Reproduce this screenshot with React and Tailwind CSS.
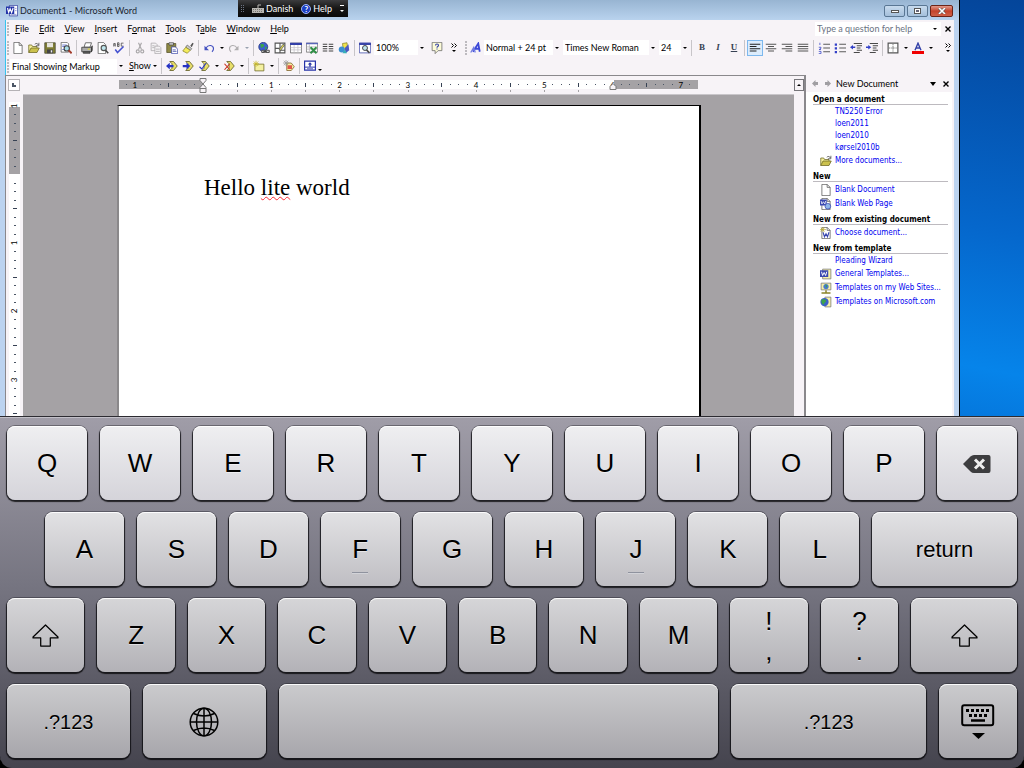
import clsx from "clsx";

const MENUS = [
  ["", "F", "ile"],
  ["", "E", "dit"],
  ["", "V", "iew"],
  ["", "I", "nsert"],
  ["F", "o", "rmat"],
  ["", "T", "ools"],
  ["T", "a", "ble"],
  ["", "W", "indow"],
  ["", "H", "elp"],
];

const page = <path d="M2.500 .5h7l4 4v11h-11z" fill="#fff" stroke="#555" />;
const fold = <path d="M9.500 .5v4h4" fill="none" stroke="#555" />;
const arrowLeft = <path d="M0 8l5-4.500v3h5v3H5v3z" fill="#2733c4" />;
const diamond = <path d="M5 2h5l5 6-5 6H5l3-3V5z" fill="#e8df6a" stroke="#55511c" />;

// All drawn on a 16x16 grid
const ICONS = {
  word: (
    <>
      <path d="M4.500 .5h11v14h-11z" fill="#fff" stroke="#2a3a9c" />
      <path d="M6 12.500h8M12 4.500h2M12 7.500h2" stroke="#7a86c8" />
      <path d="M0 2h11v10H0z" fill="#2333a8" />
      <path d="M2 4l1.500 6L5.500 5l2 5L9.500 4" fill="none" stroke="#fff" strokeWidth="1.500" />
    </>
  ),
  blank: <>{page}{fold}</>,
  open: (
    <>
      <path d="M1 14V4h4l1 2h6v3" fill="#f4ef9b" stroke="#6b6622" />
      <path d="M1 14l3-6h11l-3 6z" fill="#cbc14d" stroke="#6b6622" />
      <path d="M9 3c2-2 4-1 5 1M14.500 1v4h-4" fill="none" stroke="#444" />
    </>
  ),
  save: (
    <>
      <path d="M1 1h14v14H1z" fill="#7e7c33" stroke="#4a4a3a" />
      <path d="M4 1h8v6H4z" fill="#e6e4dc" />
      <path d="M4 10h8v5H4z" fill="#444" />
      <path d="M9 11h2v3H9z" fill="#eee" />
    </>
  ),
  search: (
    <>
      <path d="M1.500 .5h8l2 2v11h-10z" fill="#fff" stroke="#555" />
      <path d="M3 4h6M3 6h6M3 10h3" stroke="#4858c8" />
      <circle cx="9" cy="8.500" r="3.500" fill="#a8dce8" stroke="#444" strokeWidth="1.500" />
      <path d="M11.500 11l4 4" stroke="#a33c2c" strokeWidth="2.500" />
    </>
  ),
  print: (
    <>
      <path d="M4 7l2-6h8l-2 6z" fill="#fff" stroke="#444" />
      <path d="M1 7h13v6H1z" fill="#aaa" stroke="#333" />
      <path d="M3 13h9v2H3zM14 7l1 -2v6l-1 2z" fill="#666" stroke="#333" />
      <path d="M9 9.500h3" stroke="#e3d83a" strokeWidth="1.500" />
    </>
  ),
  preview: (
    <>
      <path d="M1.500 .5h7l3 3v12h-10z" fill="#fff" stroke="#555" />
      <circle cx="9" cy="8" r="3.500" fill="#bfe6ee" stroke="#555" strokeWidth="1.500" />
      <path d="M11.500 11l3.500 4" stroke="#444" strokeWidth="2" />
    </>
  ),
  spell: (
    <>
      <path d="M1 6V2h2v4M1 4h2M6 1v5h2V1zM6 3.500h2M14 1.500h-3v4h3" fill="none" stroke="#444" />
      <path d="M3 10l3 4 8-8" fill="none" stroke="#4451d0" strokeWidth="2" />
    </>
  ),
  cut: (
    <>
      <path d="M6 1l4 9M10 1L6 10" stroke="#a8a6a8" strokeWidth="1.500" />
      <circle cx="5" cy="12.500" r="2" fill="none" stroke="#a8a6a8" strokeWidth="1.500" />
      <circle cx="11" cy="12.500" r="2" fill="none" stroke="#a8a6a8" strokeWidth="1.500" />
    </>
  ),
  copy: (
    <>
      <path d="M1.500 1.500h6l2 2v8h-8z" fill="#f4f2f4" stroke="#a8a6a8" />
      <path d="M6.500 5.500h6l2 2v8h-8z" fill="#f4f2f4" stroke="#a8a6a8" />
      <path d="M3 5h3M3 7.500h3M8 9.500h5M8 12.500h5" stroke="#a8a6a8" />
    </>
  ),
  paste: (
    <>
      <path d="M1 2h12v12H1z" fill="#8f8a45" stroke="#55512a" />
      <path d="M4 1h6v3H4z" fill="#ddd" stroke="#444" />
      <path d="M7.500 6.500h5l3 3v6h-8z" fill="#fff" stroke="#3a45a8" />
      <path d="M9 10.500h4M9 12.500h5" stroke="#3a45a8" />
    </>
  ),
  painter: (
    <>
      <path d="M11 5l3-4 1.500 1L13 7z" fill="#555" />
      <path d="M7 4l6 5-2 2-6-4z" fill="#ccc" stroke="#666" />
      <path d="M5 7l6 4-4 4-6-3z" fill="#f4ec5c" stroke="#8a842a" />
    </>
  ),
  undo: (
    <>
      <path d="M4 8c3-5 10-4 10 1 0 2-1 3-2 4" fill="none" stroke="#4451c0" strokeWidth="1.500" />
      <path d="M2 5v6h6z" fill="#4451c0" />
    </>
  ),
  redo: (
    <>
      <path d="M12 8c-3-5-10-4-10 1 0 2 1 3 2 4" fill="none" stroke="#b0aeb0" strokeWidth="1.500" />
      <path d="M14 5v6H8z" fill="#b0aeb0" />
    </>
  ),
  link: (
    <>
      <circle cx="7" cy="6.500" r="6" fill="#3d5fd0" stroke="#22307a" />
      <path d="M3 3c3 0 4-1 5 1s-2 3-4 4zM9 6l3 1-2 4z" fill="#3ba34c" />
      <path d="M5 11h4v3H5zM10 11h5v3h-5zM7 12.500h5" fill="#ddd" stroke="#444" strokeWidth="1.200" />
    </>
  ),
  borders: (
    <>
      <path d="M1.500 1.500h13v13h-13zM1 8.500h6M8 1v13M8 11h7" fill="#fff" stroke="#555" strokeWidth="1.500" />
      <path d="M7 10l5-7 2 1-5 7z" fill="#e8df4a" stroke="#555" />
    </>
  ),
  table: (
    <>
      <path d="M.5 1.500h15v13H.5z" fill="#fff" stroke="#555" />
      <path d="M0 1h16v3H0z" fill="#3340a8" />
      <path d="M1 7.500h14M1 10.500h14M5.500 4v10M10.500 4v10" stroke="#c4c2c8" />
    </>
  ),
  excel: (
    <>
      <path d="M.5 1.500h15v12H.5z" fill="#fff" stroke="#666" />
      <path d="M0 1h16v2H0z" fill="#5a66b8" />
      <path d="M1 6.500h14M1 9.500h14M4.500 3v10" stroke="#b4b2b8" />
      <path d="M6 7l8 8M14 7l-8 8" stroke="#2f8f45" strokeWidth="2.500" />
    </>
  ),
  columns: <path d="M1 3h6M1 6h6M1 9h6M1 12h6M9 3h6M9 6h6M9 9h6M9 12h6" stroke="#444" strokeWidth="1.500" />,
  drawing: (
    <>
      <path d="M6 2l6-1 1 8-6 1z" fill="#f0e24c" stroke="#8a842a" />
      <circle cx="5" cy="10" r="4" fill="#3b8fd0" />
      <path d="M9 8l5-5 1 8-5 4z" fill="#4e58c0" />
      <path d="M6 15l3-5 3 5z" fill="#35b0b8" />
    </>
  ),
  docmap: (
    <>
      <path d="M.5 1.500h15v13H.5z" fill="#fff" stroke="#3a45a8" />
      <path d="M0 1h16v3H0z" fill="#3a45a8" />
      <circle cx="8" cy="8" r="3.300" fill="#bfe6ee" stroke="#444" strokeWidth="1.300" />
      <path d="M10 10.500l4 4" stroke="#444" strokeWidth="2" />
    </>
  ),
  help: (
    <>
      <path d="M1.500 .5h13v11h-5l-4 4v-4h-4z" fill="#fdfbd8" stroke="#666" />
      <path d="M6 4.500c0-2.500 4-2.500 4 0 0 1.500-2 1.500-2 3M8 8.500v1.500" fill="none" stroke="#3340a8" strokeWidth="1.500" />
    </>
  ),
  styles: (
    <>
      <path d="M4 13L11 2l2 11M7 9h6" fill="none" stroke="#3c48d8" strokeWidth="2.400" />
      <path d="M1 14L5 7l2 7M2 11h4" fill="none" stroke="#6f7ae0" strokeWidth="1.600" />
    </>
  ),
  left: <path d="M1 3h14M1 6h9M1 9h14M1 12h9" stroke="#222" strokeWidth="1.600" />,
  center: <path d="M1 3h14M4 6h8M1 9h14M4 12h8" stroke="#555" strokeWidth="1.600" />,
  right: <path d="M1 3h14M6 6h9M1 9h14M6 12h9" stroke="#555" strokeWidth="1.600" />,
  justify: <path d="M1 3h14M1 6h14M1 9h14M1 12h14" stroke="#555" strokeWidth="1.600" />,
  numbers: (
    <>
      <path d="M2.500 1v3M1 7h3v1.500L1.500 10H4M1 12.500h3v3H1" fill="none" stroke="#3340c8" />
      <path d="M7 3h9M7 8h9M7 13h9" stroke="#555" strokeWidth="1.300" />
    </>
  ),
  bullets: (
    <>
      <path d="M1 2h3v3H1zM1 7h3v3H1zM1 12h3v3H1z" fill="#3340c8" />
      <path d="M7 3h9M7 8h9M7 13h9" stroke="#555" strokeWidth="1.300" />
    </>
  ),
  outdent: (
    <>
      <path d="M5 2h11M9 5h7M9 8h5M9 11h7M5 14h8" stroke="#444" strokeWidth="1.300" />
      <path d="M0 7l4-3v2h3v2H4v2z" fill="#3340c8" />
    </>
  ),
  indent: (
    <>
      <path d="M5 2h11M9 5h7M9 8h5M9 11h7M5 14h8" stroke="#444" strokeWidth="1.300" />
      <path d="M7 7L3 4v2H0v2h3v2z" fill="#3340c8" />
    </>
  ),
  outline: (
    <>
      <path d="M1.500 1.500h13v13h-13z" fill="#fff" stroke="#555" strokeWidth="1.600" />
      <path d="M8 3v10M3 8h10" stroke="#666" strokeWidth="1.400" strokeDasharray="1.400 1.400" />
    </>
  ),
  fontColor: (
    <>
      <path d="M4 11L8 1.500l4 9.500M5.500 8h5" fill="none" stroke="#3340a8" strokeWidth="1.800" />
      <path d="M0 12h16v4H0z" fill="#f00000" />
    </>
  ),
  prev: <>{diamond}{arrowLeft}</>,
  next: <>{diamond}<path d="M11 8L6 3.500v3H1v3h5v3z" fill="#2733c4" /></>,
  accept: <>{diamond}<path d="M2 9l3 3 6-8" fill="none" stroke="#2733c4" strokeWidth="1.500" /></>,
  reject: <>{diamond}<path d="M2 5l7 8M9 5l-7 8" stroke="#c8321e" strokeWidth="1.500" /></>,
  comment: (
    <>
      <path d="M2.500 5.500h12v9h-12z" fill="#f4f0a0" stroke="#6b6622" />
      <path d="M4 1v8M0 5h8M1 2l6 6M7 2L1 8" stroke="#c8b820" />
    </>
  ),
  track: (
    <>
      <path d="M5 4h6l4 5-4 5H5z" fill="#f4f0a0" stroke="#7a5a22" />
      <path d="M6 7h6v5H6z" fill="#e05548" />
      <path d="M4 0v8M0 4h8M1 1l6 6M7 1L1 7" stroke="#999" />
    </>
  ),
  pane: (
    <>
      <path d="M.8 1.500h14.400v12H.8z" fill="#fff" stroke="#2733a8" strokeWidth="1.600" />
      <path d="M1 9.500h14" stroke="#2733a8" strokeWidth="1.300" />
      <path d="M8 3l3 3H9v3H7V6H5z" fill="#2733a8" />
      <path d="M4 11.700h8" stroke="#2733a8" />
    </>
  ),
  webPage: (
    <>
      {page}{fold}
      <path d="M0 2h9v8H0z" fill="#3a48b0" />
      <path d="M1.500 4l1 4 2-3 2 3 1-4" fill="none" stroke="#fff" />
      <circle cx="10.500" cy="11" r="3.800" fill="#8fb6e8" stroke="#3a48b0" />
    </>
  ),
  choose: (
    <>
      {page}{fold}
      <path d="M4 7l2 6 2-4 2 4 2-6" fill="none" stroke="#3a48b0" strokeWidth="1.500" />
      <path d="M4 0v7M0 3.500h8M1 1l5 5M6 1L1 6" stroke="#b8a830" />
    </>
  ),
  general: (
    <>
      <path d="M3.500 1.500h11v13h-11z" fill="#f6f1a8" stroke="#777" />
      <path d="M0 3h11v9H0z" fill="#3a48b0" />
      <path d="M2 5l1.500 5 2-4 2 4L9 5" fill="none" stroke="#fff" strokeWidth="1.300" />
    </>
  ),
  webSites: (
    <>
      <path d="M1.500 1.500h13v9h-13z" fill="#f6f1a8" stroke="#777" />
      <circle cx="8" cy="6" r="3.500" fill="#4a78d0" />
      <path d="M7 3l3 2-2 3z" fill="#3ba34c" />
      <path d="M8 11v3M2 14.500h12" stroke="#8a842a" strokeWidth="2" />
    </>
  ),
  microsoft: (
    <>
      <path d="M6.500 1.500h8v13h-8z" fill="#f6f1a8" stroke="#777" />
      <circle cx="6" cy="8" r="5.500" fill="#3a5fc8" />
      <path d="M2 5c3-2 5-1 6 1S5 9 5 12c-2-1-4-4-3-7z" fill="#3ba34c" />
    </>
  ),
};

function Icon({ name, className = "size-3" }) {
  return (
    <svg viewBox="0 0 16 16" className={clsx("shrink-0", className)} aria-hidden="true">
      {ICONS[name]}
    </svg>
  );
}

function Caret({ className }) {
  return (
    <svg viewBox="0 0 4 2" className={clsx("h-[2px] w-[4px] shrink-0", className)} aria-hidden="true">
      <path d="M0 0h4L2 2z" fill="currentColor" />
    </svg>
  );
}

function Tool({ name, label, active }) {
  return (
    <button
      type="button"
      aria-label={label || name}
      className={clsx(
        "flex h-4 w-4 shrink-0 items-center justify-center",
        active && "border border-[#7db8ee] bg-[#dcecfc]"
      )}
    >
      <Icon name={name} />
    </button>
  );
}

function CaretButton({ label, muted }) {
  return (
    <button type="button" aria-label={label} className={clsx("flex h-4 w-[9px] shrink-0 items-center justify-center", muted && "text-gray-400")}>
      <Caret />
    </button>
  );
}

function Sep() {
  return <span className="mx-[2px] h-4 w-px shrink-0 bg-[#c8c5c9]" />;
}

function Grip() {
  return (
    <span className="flex w-[5px] shrink-0 flex-col items-center gap-px">
      {[0, 1, 2, 3, 4].map((i) => (
        <span key={i} className="h-[2px] w-[2px] bg-[#bdbabf]" />
      ))}
    </span>
  );
}

function Combo({ label, value, className }) {
  return (
    <span className={clsx("relative flex h-[15px] shrink-0 items-center bg-white", className)}>
      <select aria-label={label} defaultValue={value} className="w-full appearance-none bg-transparent pl-[2px] leading-[15px] outline-none">
        <option>{value}</option>
      </select>
      <span className="pointer-events-none absolute inset-y-0 right-0 flex w-2 items-center justify-center bg-[#f7f3f7]">
        <Caret />
      </span>
    </span>
  );
}

function More() {
  return (
    <button type="button" aria-label="Toolbar options" className="flex w-3 shrink-0 flex-col items-center gap-[2px]">
      <svg viewBox="0 0 6 5" className="h-[5px] w-[6px]">
        <path d="M.5 .5l2 2-2 2M3.500 .5l2 2-2 2" fill="none" stroke="#000" />
      </svg>
      <Caret />
    </button>
  );
}

function LanguageBar() {
  return (
    <div className="absolute left-[238px] top-0 flex h-[17px] w-[110px] items-center bg-linear-to-b from-[#3c3c3e] via-[#161616] to-[#0a0a0a] text-[9px] text-white">
      <span className="ml-[3px] grid grid-cols-2 gap-px">
        {Array.from({ length: 8 }, (_, i) => (
          <span key={i} className="size-px bg-gray-500" />
        ))}
      </span>
      <button type="button" className="ml-[8px] flex items-center gap-[2px]">
        <svg viewBox="0 0 12 9" className="h-[9px] w-3">
          <path d="M0 4h12v5H0z" fill="#b8b6b2" />
          <path d="M6 4V1h3" fill="none" stroke="#b8b6b2" />
          <path d="M1 5.500h10M1 7.500h10" stroke="#77756f" strokeDasharray="1 1" />
        </svg>
        Danish
      </button>
      <button type="button" className="ml-[8px] flex items-center gap-[2px]">
        <span className="flex size-[10px] items-center justify-center rounded-full border border-[#9fb4f4] bg-[#1c3fc4] text-[8px] font-bold leading-none">?</span>
        Help
      </button>
      <button type="button" aria-label="Options" className="ml-auto mr-1 flex flex-col items-center gap-1">
        <span className="h-px w-[4px] bg-white" />
        <Caret />
      </button>
    </div>
  );
}

function TitleBar() {
  const frame = "flex h-3 items-center justify-center rounded-[2px] border border-[#5a7794] bg-linear-to-b from-[#c8dbee] to-[#a4bfdb]";
  return (
    <header className="relative flex h-5 shrink-0 items-center bg-linear-to-b from-[#98b5d2] to-[#b9d3ee] pl-[6px] pr-[6px] pt-[2px] text-[9px] text-[#1c2733]">
      <Icon name="word" />
      <h1 className="ml-[2px]">Document1 - Microsoft Word</h1>
      <LanguageBar />
      <div className="ml-auto flex gap-[2px]">
        <button type="button" aria-label="Minimize" className={clsx(frame, "w-[21px]")}>
          <span className="h-[3px] w-2 border border-[#555] bg-white" />
        </button>
        <button type="button" aria-label="Restore" className={clsx(frame, "w-[21px]")}>
          <span className="h-[6px] w-[7px] border border-[#555] bg-white p-px">
            <span className="block h-[2px] w-[3px] bg-[#667]" />
          </span>
        </button>
        <button type="button" aria-label="Close" className="flex h-3 w-[23px] items-center justify-center rounded-[2px] border border-[#6b2418] bg-linear-to-b from-[#e0988a] via-[#c4432b] to-[#cf6148]">
          <svg viewBox="0 0 8 6" className="h-[6px] w-2">
            <path d="M1 0l6 6M7 0L1 6" stroke="#555" strokeWidth="2.600" />
            <path d="M1 0l6 6M7 0L1 6" stroke="#fff" strokeWidth="1.600" />
          </svg>
        </button>
      </div>
    </header>
  );
}

function CloseX() {
  return (
    <svg viewBox="0 0 6 6" className="size-[6px]">
      <path d="M.5 .5l5 5M5.500 .5l-5 5" stroke="#000" strokeWidth="1.400" />
    </svg>
  );
}

function MenuBar() {
  return (
    <nav className="flex h-[18px] items-center">
      <Grip />
      <div className="ml-[5px] flex gap-[10px]">
        {MENUS.map(([before, key, after]) => (
          <button key={before + key + after} type="button">
            {before}
            <span className="underline underline-offset-1">{key}</span>
            {after}
          </button>
        ))}
      </div>
      <span className="ml-auto flex h-[14px] w-[126px] items-center bg-white">
        <input aria-label="Help question" placeholder="Type a question for help" className="w-[118px] bg-transparent pl-[2px] outline-none placeholder:text-gray-500" />
        <Caret />
      </span>
      <button type="button" aria-label="Close document" className="ml-[4px] mr-[3px]">
        <CloseX />
      </button>
    </nav>
  );
}

function StandardToolbar() {
  return (
    <div className="flex h-[19px] items-center">
      <Grip />
      <Tool name="blank" label="New" />
      <Tool name="open" />
      <Tool name="save" />
      <Tool name="search" />
      <Sep />
      <Tool name="print" />
      <Tool name="preview" />
      <Tool name="spell" />
      <Sep />
      <Tool name="cut" />
      <Tool name="copy" />
      <Tool name="paste" />
      <Tool name="painter" />
      <Sep />
      <Tool name="undo" />
      <CaretButton label="Undo list" />
      <Tool name="redo" />
      <CaretButton label="Redo list" muted />
      <Sep />
      <Tool name="link" />
      <Tool name="borders" />
      <Tool name="table" />
      <Tool name="excel" />
      <Tool name="columns" />
      <Tool name="drawing" />
      <Sep />
      <Tool name="docmap" />
      <Combo label="Zoom" value="100%" className="ml-px w-[52px]" />
      <span className="ml-[3px] flex">
        <Tool name="help" />
      </span>
      <span className="mx-[3px] flex">
        <More />
      </span>
      <Grip />
      <Tool name="styles" />
      <Combo label="Style" value="Normal + 24 pt" className="w-[77px]" />
      <Combo label="Font" value="Times New Roman" className="ml-[2px] w-[94px]" />
      <Combo label="Font size" value="24" className="ml-[2px] w-[30px]" />
      <Sep />
      <button type="button" className="w-4 shrink-0 font-['Liberation_Serif',serif] font-bold text-gray-700">B</button>
      <button type="button" className="w-4 shrink-0 font-['Liberation_Serif',serif] font-bold italic text-gray-700">I</button>
      <button type="button" className="w-4 shrink-0 font-['Liberation_Serif',serif] font-bold text-gray-700 underline">U</button>
      <Sep />
      <Tool name="left" active />
      <Tool name="center" />
      <Tool name="right" />
      <Tool name="justify" />
      <Sep />
      <Tool name="numbers" />
      <Tool name="bullets" />
      <Tool name="outdent" />
      <Tool name="indent" />
      <Sep />
      <Tool name="outline" />
      <CaretButton label="Border list" />
      <Tool name="fontColor" />
      <CaretButton label="Colour list" />
      <span className="ml-auto flex">
        <More />
      </span>
    </div>
  );
}

function ReviewToolbar() {
  return (
    <div className="flex h-[18px] items-center">
      <Grip />
      <Combo label="Display for review" value="Final Showing Markup" className="w-[115px]" />
      <button type="button" className="ml-[4px] flex w-7 items-center justify-between">
        <span><span className="underline underline-offset-1">S</span>how</span>
        <Caret />
      </button>
      <span className="ml-[2px] flex items-center">
        <Sep />
        <Tool name="prev" />
        <Tool name="next" />
        <Tool name="accept" />
        <CaretButton label="Accept list" />
        <Tool name="reject" />
        <CaretButton label="Reject list" />
        <Sep />
        <Tool name="comment" />
        <CaretButton label="Comment list" />
        <Sep />
        <Tool name="track" />
        <Sep />
        <Tool name="pane" />
      </span>
      <Caret className="mt-2" />
    </div>
  );
}

// One mark per eighth of an inch
function Mark({ eighth, vertical }) {
  if (eighth === 0) return null;
  if (eighth % 8 === 0) {
    return <span className={clsx("text-[8px] leading-none", vertical && "-rotate-90")}>{Math.abs(eighth / 8)}</span>;
  }
  if (eighth % 4 === 0) return <span className={clsx("bg-gray-700", vertical ? "h-px w-1" : "h-1 w-px")} />;
  return <span className={clsx("bg-gray-600", vertical ? "h-px w-[2px]" : "size-px")} />;
}

function Ruler() {
  return (
    <div className="flex h-[18px] shrink-0 items-start">
      <button type="button" aria-label="Tab stop" className="ml-[2px] mt-[3px] flex size-3 items-center justify-center border border-[#b5b2b6] bg-white">
        <span className="size-1 border-b-2 border-l-2 border-gray-600" />
      </button>
      <div className="relative ml-[99px] mt-1 h-[9px] w-[579px] shrink-0">
        <div className="flex h-full">
          <div className="w-[84px] bg-[#a5a2a5]" />
          <div className="flex-1 bg-white" />
          <div className="w-[84px] bg-[#a5a2a5]" />
        </div>
        <div className="absolute inset-y-0 left-[3px] flex w-[572px]">
          {Array.from({ length: 67 }, (_, i) => i - 9).map((eighth) => (
            <span key={eighth} className="relative flex w-0 flex-1 items-center justify-center">
              <Mark eighth={eighth} />
              {eighth > 0 && eighth < 48 && eighth % 4 === 0 && (
                <span className="absolute left-1 top-[10px] h-[2px] w-px bg-[#a5a2a5]" />
              )}
            </span>
          ))}
        </div>
        <svg viewBox="0 0 8 16" className="absolute -top-[2px] left-[80px] h-4 w-2">
          <path d="M1 .5h6v2L4 6 1 2.500zM4 6l3 3.500v5H1v-5z" fill="#f7f3f7" stroke="#777" />
          <path d="M1 10.500h6" stroke="#777" />
        </svg>
        <svg viewBox="0 0 8 7" className="absolute left-[490px] top-[3px] h-[7px] w-2">
          <path d="M4 .5l3 3v3H1v-3z" fill="#f7f3f7" stroke="#777" />
        </svg>
      </div>
    </div>
  );
}

function Editor() {
  return (
    <div className="flex min-w-0 flex-1 flex-col border-l border-t border-[#8a888c]">
      <Ruler />
      <div className="flex min-h-0 flex-1 overflow-hidden">
        <div className="flex w-[17px] shrink-0 justify-center overflow-hidden pt-2">
          <div className="relative h-[316px] w-[11px] bg-white">
            <div className="absolute inset-x-0 top-[5px] h-[67px] bg-[#a5a2a5]" />
            <div className="relative flex h-full flex-col">
              {Array.from({ length: 37 }, (_, i) => (
                <span key={i} className="flex h-0 flex-1 items-center justify-center">
                  <Mark eighth={i - 8} vertical />
                </span>
              ))}
            </div>
          </div>
        </div>
        <div className="flex-1 overflow-hidden border-t border-[#c9c6ca] bg-[#a5a2a5] pl-[94px] pt-[10px]">
          <article className="h-full w-[584px] border-l-2 border-r-2 border-t border-black border-l-[#8a888a] bg-white pl-[85px] pt-[69px]">
            <p className="font-['Liberation_Serif',serif] text-[23px] leading-[26px]">
              Hello <span className="underline decoration-red-500 decoration-wavy decoration-1 underline-offset-1">lite</span> world
            </p>
          </article>
        </div>
      </div>
    </div>
  );
}

function ScrollBar() {
  return (
    <div className="w-3 shrink-0 border-r-2 border-t border-[#8a888c] bg-[#f7f3f7] pt-[3px]">
      <button type="button" aria-label="Scroll up" className="flex h-3 w-[10px] items-center justify-center border border-[#77757a] bg-[#f7f3f7]">
        <Caret className="rotate-180" />
      </button>
    </div>
  );
}

const TASKS = [
  {
    title: "Open a document",
    items: [
      [null, "TN5250 Error"],
      [null, "loen2011"],
      [null, "loen2010"],
      [null, "kørsel2010b"],
      ["open", "More documents..."],
    ],
  },
  { title: "New", items: [["blank", "Blank Document"], ["webPage", "Blank Web Page"]] },
  { title: "New from existing document", items: [["choose", "Choose document..."]] },
  {
    title: "New from template",
    items: [
      [null, "Pleading Wizard"],
      ["general", "General Templates..."],
      ["webSites", "Templates on my Web Sites..."],
      ["microsoft", "Templates on Microsoft.com"],
    ],
  },
];

function TaskPane() {
  return (
    <aside className="mr-[2px] flex w-[146px] shrink-0 flex-col bg-white">
      <div className="flex h-[17px] items-center bg-[#f7f3f7] pl-[6px] pr-[3px]">
        <svg viewBox="0 0 19 7" className="h-[7px] w-[19px]">
          <path d="M0 3.500L3.500 0v2H6v3H3.500v2zM19 3.500L15.500 0v2H13v3h2.500v2z" fill="#a09ea2" />
        </svg>
        <h2 className="ml-[5px]">New Document</h2>
        <button type="button" aria-label="Pane menu" className="ml-auto">
          <svg viewBox="0 0 6 4" className="h-1 w-[6px]"><path d="M0 0h6L3 4z" /></svg>
        </button>
        <button type="button" aria-label="Close pane" className="ml-[7px]">
          <CloseX />
        </button>
      </div>
      <div className="flex flex-col gap-1 pl-[7px] pr-1 pt-[3px] font-['DejaVu_Sans_Condensed','DejaVu_Sans',sans-serif] text-[8px]">
        {TASKS.map(({ title, items }) => (
          <section key={title}>
            <h3 className="h-[10px] border-b border-[#bdbabf] font-bold leading-[9px]">{title}</h3>
            <ul className="pt-px">
              {items.map(([icon, text]) => (
                <li key={text}>
                  <a href="#" className={clsx("flex items-center whitespace-nowrap text-[#0000f0]", icon ? "h-[14px]" : "h-3")}>
                    <span className="flex w-[22px] shrink-0 pl-[7px]">{icon && <Icon name={icon} />}</span>
                    {text}
                  </a>
                </li>
              ))}
            </ul>
          </section>
        ))}
      </div>
    </aside>
  );
}

function WordWindow() {
  return (
    <div className="flex min-w-0 flex-1 flex-col border-r border-black">
      <TitleBar />
      <div className="flex min-h-0 flex-1 flex-col border-l-[5px] border-r-[5px] border-[#bcd3f0] bg-[#f7f3f7] text-[9px] text-black shadow-[1px_0_0_#35c4ee_inset]">
        <MenuBar />
        <StandardToolbar />
        <ReviewToolbar />
        <div className="flex min-h-0 flex-1">
          <Editor />
          <ScrollBar />
          <TaskPane />
        </div>
      </div>
    </div>
  );
}

function ShiftIcon() {
  return (
    <svg viewBox="0 0 28 24" className="h-[23px] w-[27px]">
      <path d="M14 1L27 13.500V14.500H19V23H9V14.500H1V13.500z" fill="none" stroke="#000" strokeWidth="1.300" strokeLinejoin="round" />
    </svg>
  );
}

function DeleteIcon() {
  return (
    <svg viewBox="0 0 28 18" className="h-[18px] w-7">
      <path d="M0 9L7.500 1.500Q9 0 11 0H25.500Q27.500 0 27.500 2V16Q27.500 18 25.500 18H11Q9 18 7.500 16.500z" fill="#3d3d3f" />
      <path d="M12 4.500l9 9M21 4.500l-9 9" stroke="#eee" strokeWidth="3" />
    </svg>
  );
}

function GlobeIcon() {
  return (
    <svg viewBox="0 0 30 30" className="size-[30px]" fill="none" stroke="#000" strokeWidth="1.500">
      <circle cx="15" cy="15" r="13.800" />
      <ellipse cx="15" cy="15" rx="7.500" ry="13.800" />
      <path d="M15 1v28M1 15h28M4.500 6.500Q15 11.500 25.500 6.500M4.500 23.500Q15 18.500 25.500 23.500" />
    </svg>
  );
}

function HideIcon() {
  return (
    <svg viewBox="0 0 34 36" className="h-9 w-[34px]">
      <rect x="1.200" y="1.200" width="31" height="20" rx="2" fill="none" stroke="#000" strokeWidth="2" />
      <path d="M5 6.500h24M8 11.500h19" stroke="#000" strokeWidth="3" strokeDasharray="3 2" />
      <path d="M10 16.500h14" stroke="#000" strokeWidth="2.500" />
      <path d="M11 29h13l-6.500 6z" />
    </svg>
  );
}

function Key({ label, second, home, size = "flex-1", shade, text = "text-[26px]", children }) {
  return (
    <button
      type="button"
      aria-label={children ? label : undefined}
      className={clsx(
        "relative flex h-[74px] min-w-0 items-center justify-center rounded-lg bg-linear-to-b pt-px shadow-[inset_0_1px_0_rgba(255,255,255,0.9),0_0_0_1px_rgba(30,30,36,0.35),0_1px_1px_1px_rgba(0,0,0,0.75)]",
        "[text-shadow:0_1px_0_rgba(255,255,255,0.5)]",
        size,
        shade,
        text
      )}
    >
      {children || (second ? (
        <span className="flex flex-col leading-[30px]">
          <span>{label}</span>
          <span>{second}</span>
        </span>
      ) : label)}
      {home && <span className="absolute bottom-3 h-[2px] w-4 border-b border-white/60 bg-gray-500/60" />}
    </button>
  );
}

function Keyboard() {
  const row1 = "from-[#efeff1] to-[#d5d4da]";
  const row2 = "from-[#e2e2e4] to-[#bfbec3]";
  const row3 = "from-[#d6d6d8] to-[#b3b2b7]";
  const row4 = "from-[#cbcbcd] to-[#a7a6ab]";
  return (
    <div className="shrink-0 bg-black">
      <div className="flex flex-col gap-3 rounded-b-xl border-t border-[#2c2b31] bg-linear-to-b from-[#a09da8] via-[#74737f] to-[#45444e] px-[7px] pb-[10px] pt-[9px] font-['Liberation_Sans',Arial,sans-serif] text-black shadow-[inset_0_1px_0_#c2c0c8]">
        <div className="flex gap-[13px]">
          {"QWERTYUIOP".split("").map((k) => (
            <Key key={k} label={k} shade={row1} />
          ))}
          <Key label="Delete" shade={row1}><DeleteIcon /></Key>
        </div>
        <div className="flex gap-[13px] pl-[38px]">
          {"ASDFGHJKL".split("").map((k) => (
            <Key key={k} label={k} shade={row2} size="flex-79" home={k === "F" || k === "J"} />
          ))}
          <Key label="return" shade={row2} size="flex-145" text="text-[22px]" />
        </div>
        <div className="flex gap-[13px]">
          <Key label="Shift" shade={row3} size="flex-155"><ShiftIcon /></Key>
          {"ZXCVBNM".split("").map((k) => (
            <Key key={k} label={k} shade={row3} size="flex-155" />
          ))}
          <Key label="!" second="," shade={row3} size="flex-155" />
          <Key label="?" second="." shade={row3} size="flex-155" />
          <Key label="Right shift" shade={row3} size="flex-212"><ShiftIcon /></Key>
        </div>
        <div className="flex gap-[13px]">
          <Key label=".?123" shade={row4} size="flex-123" text="text-[20px]" />
          <Key label="Next keyboard" shade={row4} size="flex-123"><GlobeIcon /></Key>
          <Key label="Space" shade={row4} size="flex-440"><span /></Key>
          <Key label=".?123" shade={row4} size="flex-195" text="text-[20px]" />
          <Key label="Hide keyboard" shade={row4} size="flex-78"><HideIcon /></Key>
        </div>
      </div>
    </div>
  );
}

export default function App() {
  return (
    <div className="flex h-screen flex-col overflow-hidden font-['Lato','Noto_Sans',sans-serif]">
      <main className="flex min-h-0 flex-1 bg-black">
        <WordWindow />
        <div className="w-16 shrink-0 bg-linear-[190deg,#04459a,#0567cc_55%,#0684ea_88%,#0578dd]" />
      </main>
      <Keyboard />
    </div>
  );
}
